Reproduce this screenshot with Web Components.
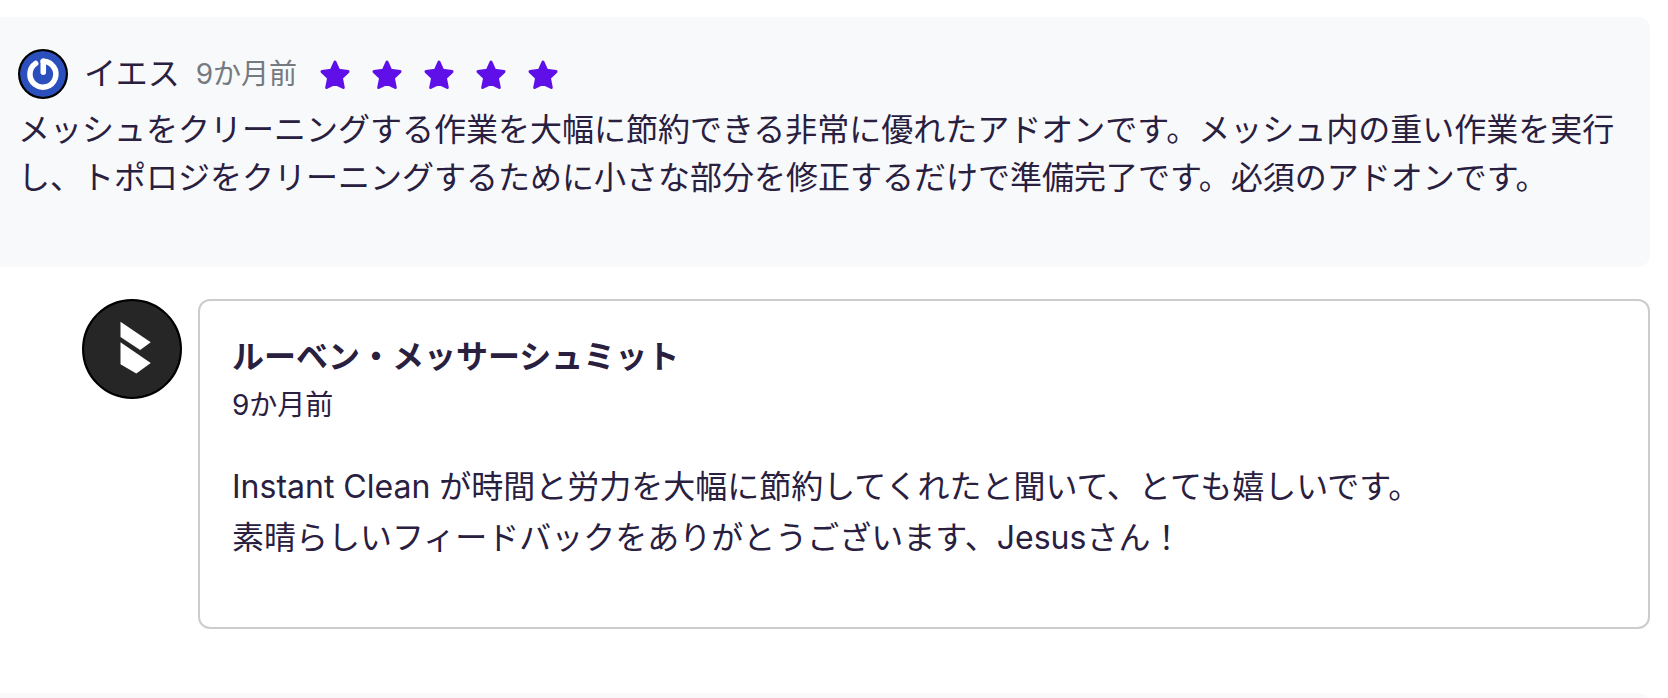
<!DOCTYPE html>
<html lang="ja">
<head>
<meta charset="utf-8">
<meta name="viewport" content="width=device-width, initial-scale=1">
<title>レビュー</title>
<style>
    body {
        margin: 0;
        background: #fff;
        color: #29203f;
        font-family: Inter, "Noto Sans CJK JP", sans-serif;
        font-size: 32px;
        line-height: 48px;
    }
</style>
</head>
<body>

<review-list>
    <review-card>
        <user-avatar slot="avatar" data-size="50">
            <svg viewBox="0 0 50 50" aria-hidden="true">
                <rect width="50" height="50" fill="#2b50bd"/>
                <path d="M17 13.5 A14.1 14.1 0 1 0 25.3 11.1" fill="none" stroke="#fff" stroke-width="6" stroke-linecap="round"/>
                <path d="M25.3 11.2 V23.2" fill="none" stroke="#fff" stroke-width="6" stroke-linecap="round"/>
            </svg>
        </user-avatar>
        <span slot="author">イエス</span>
        <span slot="date">9か月前</span>
        <review-stars slot="rating" data-value="5"></review-stars>
        メッシュをクリーニングする作業を大幅に節約できる非常に優れたアドオンです。メッシュ内の重い作業を実行し、トポロジをクリーニングするために小さな部分を修正するだけで準備完了です。必須のアドオンです。
    </review-card>

    <review-reply>
        <user-avatar slot="avatar" data-size="100">
            <svg viewBox="0 0 100 100" aria-hidden="true">
                <rect width="100" height="100" fill="#262626"/>
                <path d="M38 21.5 L69.5 43 L58.5 51 L38 37.5 Z" fill="#fff"/>
                <path d="M38 43 L69.5 64.5 L54.5 75.5 L38 66 Z" fill="#fff"/>
            </svg>
        </user-avatar>
        <span slot="author">ルーベン・メッサーシュミット</span>
        <span slot="date">9か月前</span>
        Instant Clean が時間と労力を大幅に節約してくれたと聞いて、とても嬉しいです。<br>
        素晴らしいフィードバックをありがとうございます、Jesusさん！
    </review-reply>

    <review-card data-empty="true"></review-card>
</review-list>

<script>
/** <review-list> 縦に並ぶレビューの一覧 */
class ReviewList extends HTMLElement {
    constructor() {
        super();
        this.attachShadow({ mode: 'open' });
        this.shadowRoot.innerHTML = `
            <style>
                :host {
                    display: block;
                    height: 100vh;
                    overflow: hidden;
                }
                .list {
                    display: flex;
                    flex-direction: column;
                    padding: 17px 18px 0 0;
                }
            </style>
            <div class="list"><slot></slot></div>
        `;
    }
}

/**
 * <user-avatar> 丸いアバター
 * data-size - 直径 (px)
 */
class UserAvatar extends HTMLElement {
    constructor() {
        super();
        this.attachShadow({ mode: 'open' });
    }

    connectedCallback() {
        const size = parseInt(this.dataset.size) || 50;
        this.shadowRoot.innerHTML = `
            <style>
                :host {
                    display: flex;
                    flex: none;
                    box-sizing: border-box;
                    width: ${size}px;
                    height: ${size}px;
                    border: 2px solid #000;
                    border-radius: 50%;
                    overflow: hidden;
                    background: #000;
                }
                ::slotted(svg) {
                    display: block;
                    width: 100%;
                    height: 100%;
                    border-radius: 50%;
                }
            </style>
            <slot></slot>
        `;
    }
}

/**
 * <review-stars> 読み取り専用の星評価
 * data-value - 星の数
 */
class ReviewStars extends HTMLElement {
    constructor() {
        super();
        this.attachShadow({ mode: 'open' });
    }

    connectedCallback() {
        this.render();
    }

    getStarsHTML(value) {
        let html = '';
        for (let i = 0; i < value; i++) {
            html += `<svg viewBox="0 0 36 36" aria-hidden="true"><path d="M18 6 L21.6 14.2 L31 15.6 L24.4 22 L26.3 31.5 L18 27.4 L9.7 31.5 L11.6 22 L5 15.6 L14.4 14.2 Z"/></svg>`;
        }
        return html;
    }

    render() {
        const value = parseInt(this.dataset.value) || 0;
        this.setAttribute('role', 'img');
        this.setAttribute('aria-label', `5段階中${value}`);
        this.shadowRoot.innerHTML = `
            <style>
                :host {
                    display: flex;
                    gap: 16px;
                }
                svg {
                    width: 36px;
                    height: 36px;
                    fill: #5f0fe8;
                    stroke: #5f0fe8;
                    stroke-width: 3;
                    stroke-linejoin: round;
                }
            </style>
            ${this.getStarsHTML(value)}
        `;
    }
}

/** <review-card> 購入者のレビュー */
class ReviewCard extends HTMLElement {
    constructor() {
        super();
        this.attachShadow({ mode: 'open' });
    }

    connectedCallback() {
        this.shadowRoot.innerHTML = `
            <style>
                :host {
                    display: block;
                    padding: 32px 18px 65px;
                    border-radius: 0 12px 12px 0;
                    background: #f8f9fb;
                }
                header {
                    display: flex;
                    align-items: center;
                    gap: 16px;
                    margin-bottom: 7px;
                }
                .date {
                    color: #747a80;
                    font-size: 28px;
                }
                .rating {
                    margin-left: 4px;
                }
                p {
                    margin: 0;
                }
            </style>
            ${this.dataset.empty === 'true' ? '' : `
            <header>
                <slot name="avatar"></slot>
                <slot name="author"></slot>
                <span class="date"><slot name="date"></slot></span>
                <div class="rating"><slot name="rating"></slot></div>
            </header>
            <p><slot></slot></p>`}
        `;
    }
}

/** <review-reply> 制作者からの返信 */
class ReviewReply extends HTMLElement {
    constructor() {
        super();
        this.attachShadow({ mode: 'open' });
        this.shadowRoot.innerHTML = `
            <style>
                :host {
                    display: flex;
                    align-items: flex-start;
                    gap: 16px;
                    margin: 32px 0 64px 82px;
                }
                article {
                    flex: 1;
                    padding: 32px 32px 64px;
                    border: 2px solid #ccc;
                    border-radius: 12px;
                }
                h3 {
                    margin: 0;
                    font-size: 32px;
                    font-weight: 700;
                }
                .date {
                    font-size: 28px;
                }
                p {
                    margin: 32px 0 0;
                    line-height: 51px;
                }
            </style>
            <slot name="avatar"></slot>
            <article>
                <h3><slot name="author"></slot></h3>
                <div class="date"><slot name="date"></slot></div>
                <p><slot></slot></p>
            </article>
        `;
    }
}

customElements.define('review-list', ReviewList);
customElements.define('user-avatar', UserAvatar);
customElements.define('review-stars', ReviewStars);
customElements.define('review-card', ReviewCard);
customElements.define('review-reply', ReviewReply);
</script>
</body>
</html>
